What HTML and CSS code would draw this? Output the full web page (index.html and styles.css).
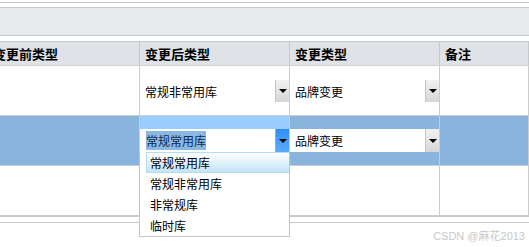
FILE: index.html
```html
<!DOCTYPE html>
<html lang="zh-CN">
<head>
    <meta charset="UTF-8">
    <title>变更类型</title>
    <link rel="stylesheet" href="styles.css">
</head>
<body>
    <div class="page">
        <div class="topline"></div>
        <div class="toolbar"></div>
        <div class="grid">
            <div class="row head">
                <div class="cell">变更前类型</div>
                <div class="cell">变更后类型</div>
                <div class="cell">变更类型</div>
                <div class="cell">备注</div>
            </div>
            <div class="row">
                <div class="cell"></div>
                <div class="cell">
                    <div class="select plain">
                        <span class="val">常规非常用库</span>
                        <span class="btn"><i class="arrow"></i></span>
                    </div>
                </div>
                <div class="cell">
                    <div class="select plain">
                        <span class="val">品牌变更</span>
                        <span class="btn"><i class="arrow"></i></span>
                    </div>
                </div>
                <div class="cell"></div>
            </div>
            <div class="row selected">
                <div class="cell"></div>
                <div class="cell active">
                    <div class="select focus">
                        <span class="val"><span class="hilite">常规常用库</span></span>
                        <span class="btn"><i class="arrow"></i></span>
                    </div>
                    <ul class="options">
                        <li class="current">常规常用库</li>
                        <li>常规非常用库</li>
                        <li>非常规库</li>
                        <li>临时库</li>
                    </ul>
                </div>
                <div class="cell">
                    <div class="select">
                        <span class="val">品牌变更</span>
                        <span class="btn"><i class="arrow"></i></span>
                    </div>
                </div>
                <div class="cell"></div>
            </div>
            <div class="row last">
                <div class="cell"></div>
                <div class="cell"></div>
                <div class="cell"></div>
                <div class="cell"></div>
            </div>
        </div>
        <div class="pager"></div>
        <div class="mark">CSDN @麻花2013</div>
    </div>
</body>
</html>
```

FILE: styles.css
```css
body, html {
    margin: 0;
    padding: 0;
    background: #fff;
    font-family: "Noto Sans CJK SC", "Liberation Sans", sans-serif;
    font-size: 12px;
    color: #000;
}
.page {
    width: 529px;
    height: 247px;
    overflow: hidden;
    position: relative;
}
.topline {
    height: 2px;
    border-bottom: 1px solid #c6c9cc;
    margin-bottom: 4px;
}
.toolbar {
    height: 27px;
    background: #e8ebee;
    border-top: 1px solid #c6c9cc;
    border-bottom: 1px solid #c6c9cc;
    margin-bottom: 5px;
}
.grid {
    margin-left: -12px;
    border-top: 1px solid #c6c9cc;
}
.row {
    display: grid;
    grid-template-columns: 152px 150px 150px 1fr;
    height: 50px;
    border-bottom: 1px solid #ccc;
    box-sizing: border-box;
}
.row.head {
    height: 24px;
    background: #dfe2e6;
    border-bottom: 1px solid #d0d3d6;
}
.row.head .cell {
    font-size: 13px;
    font-weight: bold;
    line-height: 22px;
    padding-left: 5px;
}
.row.selected {
    background: #88b4de;
}
.row.last {
    height: 51px;
    border-bottom: 2px solid #c8ccd0;
}
.cell {
    border-right: 1px solid #ccc;
    box-sizing: border-box;
    display: flex;
    align-items: center;
    position: relative;
}
.row.head .cell {
    border-right-color: #c6c9cc;
}
.cell.active {
    background: #99ccff;
    align-items: flex-start;
    padding-top: 13px;
}
.select {
    display: flex;
    width: 100%;
    height: 23px;
    background: #fff;
}
.select.plain {
    background: transparent;
    height: 22px;
}
.val {
    flex: 1;
    line-height: 23px;
    padding-left: 5px;
}
.select.focus .val {
    padding-left: 6px;
}
.hilite {
    background: #8ab8e2;
    color: #0c2c50;
    padding: 1px 0;
}
.btn {
    width: 13px;
    border-left: 1px solid #c4c4c4;
    background: linear-gradient(#f2f2f2, #d6d6d6);
    display: flex;
    align-items: center;
    justify-content: center;
}
.select.focus .btn {
    border-left-color: #79b8f0;
    background: linear-gradient(#2f8ff6, #5aaaff);
}
.arrow {
    width: 0;
    height: 0;
    border-left: 4px solid transparent;
    border-right: 4px solid transparent;
    border-top: 4px solid #000;
}
.options {
    position: absolute;
    top: 36px;
    left: -1px;
    width: 151px;
    height: 85px;
    box-sizing: border-box;
    margin: 0;
    padding: 0 0 0 6px;
    list-style: none;
    background: #fff;
    border: 1px solid #c4c4c4;
    border-top: none;
    z-index: 10;
}
.options li {
    height: 21px;
    line-height: 21px;
    padding-left: 4px;
    font-size: 12px;
    box-sizing: border-box;
}
.options li.current {
    border: 1px solid #b4dcf2;
    border-right: none;
    padding-left: 3px;
    line-height: 19px;
    background: linear-gradient(#ffffff, #c3e4f6);
}
.pager {
    margin-top: 5px;
    border-top: 1px solid #c8c8c8;
}
.mark {
    position: absolute;
    right: 4px;
    top: 227px;
    font-family: "Liberation Sans", "Noto Sans CJK SC", sans-serif;
    font-size: 11px;
    color: #c8c8c8;
}
```
